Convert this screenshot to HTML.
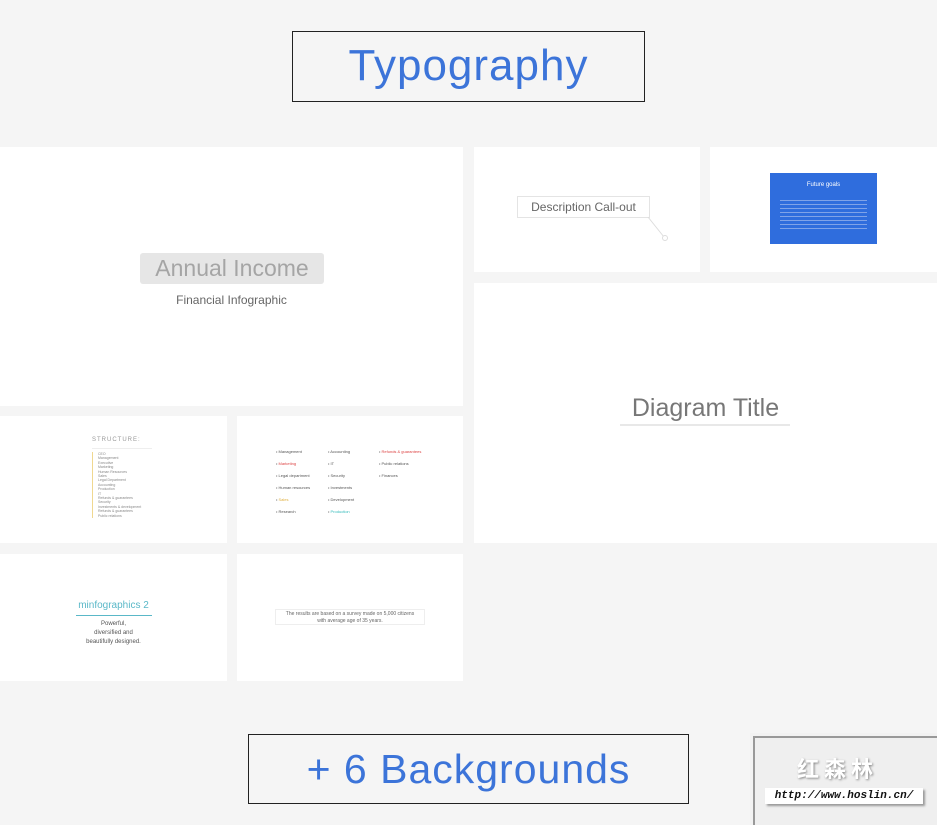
<!DOCTYPE html>
<html><head><meta charset="utf-8"><style>
*{margin:0;padding:0;box-sizing:border-box}
body{width:937px;height:825px;background:#f5f5f5;position:relative;overflow:hidden;font-family:"Liberation Sans",sans-serif}
.a{position:absolute}
.p{position:absolute;background:#fff}
.box{position:absolute;border:1px solid #222;color:#3c74d9;text-align:center}
.t{position:absolute;white-space:nowrap}
.sm{font-size:4px;color:#888;line-height:6.5px}
</style></head><body>
<div class="box" style="left:292px;top:31px;width:353px;height:71px;font-size:44px;line-height:68px;letter-spacing:1px">Typography</div>

<div class="p" style="left:0;top:147px;width:463px;height:259px"></div>
<div class="a" style="left:140px;top:253px;width:184px;height:31px;background:#e6e6e6;border-radius:3px;color:#a5a5a5;font-size:23px;line-height:31px;text-align:center">Annual Income</div>
<div class="t" style="left:0;width:463px;top:293px;text-align:center;font-size:12px;color:#666">Financial Infographic</div>

<div class="p" style="left:474px;top:147px;width:226px;height:125px"></div>
<div class="a" style="left:517px;top:196px;width:133px;height:22px;border:1px solid #e4e4e4;color:#666;font-size:12px;line-height:20px;text-align:center">Description Call-out</div>
<svg class="a" style="left:640px;top:216px" width="30" height="28"><line x1="8" y1="1" x2="24" y2="21" stroke="#ddd"/><circle cx="25" cy="22" r="2.5" fill="#fff" stroke="#ddd"/></svg>

<div class="p" style="left:710px;top:147px;width:227px;height:125px"></div>
<div class="a" style="left:770px;top:173px;width:107px;height:71px;background:#2f6ddd">
<div class="t" style="left:0;width:107px;top:9px;text-align:center;color:#fff;font-size:6px">Future goals</div>
<div class="a" style="left:10px;top:26px;width:87px;height:33px;background:repeating-linear-gradient(#2f6ddd 0,#2f6ddd 1px,#7fa3e8 1px,#7fa3e8 2px,#2f6ddd 2px,#2f6ddd 4px)"></div>
</div>

<div class="p" style="left:474px;top:283px;width:463px;height:260px"></div>
<div class="t" style="left:474px;width:463px;top:394px;text-align:center;font-size:25px;color:#777">Diagram Title</div>
<div class="a" style="left:620px;top:424px;width:170px;height:2px;background:#e8e8e8"></div>

<div class="p" style="left:0;top:416px;width:227px;height:127px"></div>
<div class="t" style="left:92px;top:437px;font-size:6px;color:#999;letter-spacing:1px">STRUCTURE:</div>
<div class="a" style="left:92px;top:448px;width:60px;height:1px;background:#eee"></div>
<div class="a sm" style="left:92px;top:452px;border-left:1px solid #f0d890;padding-left:5px;font-size:3.5px;line-height:4.4px">CEO<br>Management<br>Executive<br>Marketing<br>Human Resources<br>Sales<br>Legal Department<br>Accounting<br>Production<br>IT<br>Refunds &amp; guarantees<br>Security<br>Investments &amp; development<br>Refunds &amp; guarantees<br>Public relations</div>

<div class="p" style="left:237px;top:416px;width:226px;height:127px"></div>
<div class="a sm" style="left:276px;top:446px;line-height:12px;color:#555">• Management<br>• <span style="color:#d44">Marketing</span><br>• Legal department<br>• Human resources<br>• <span style="color:#e0b040">Sales</span><br>• Research</div>
<div class="a sm" style="left:328px;top:446px;line-height:12px;color:#555">• Accounting<br>• IT<br>• Security<br>• Investments<br>• Development<br>• <span style="color:#3bb">Production</span></div>
<div class="a sm" style="left:379px;top:446px;line-height:12px;color:#555">• <span style="color:#d44">Refunds &amp; guarantees</span><br>• Public relations<br>• Finances</div>

<div class="p" style="left:0;top:554px;width:227px;height:127px"></div>
<div class="t" style="left:0;width:227px;top:600px;text-align:center;font-size:10px;color:#5ab8c8">minfographics 2</div>
<div class="a" style="left:76px;top:615px;width:76px;height:1px;background:#5ab8c8"></div>
<div class="t" style="left:0;width:227px;top:620px;text-align:center;font-size:6px;line-height:9px;color:#555">Powerful,<br>diversified and<br>beautifully designed.</div>

<div class="p" style="left:237px;top:554px;width:226px;height:127px"></div>
<div class="a" style="left:275px;top:609px;width:150px;height:16px;border:1px solid #eee;font-size:5px;line-height:6.5px;color:#666;text-align:center;padding-top:1px">The results are based on a survey made on 5,000 citizens<br>with average age of 35 years.</div>

<div class="box" style="left:248px;top:734px;width:441px;height:70px;font-size:41px;line-height:68px;letter-spacing:1px">+ 6 Backgrounds</div>

<div class="a" style="left:750px;top:733px;width:187px;height:92px;background:#f2f2f2"></div>
<div class="a" style="left:753px;top:736px;width:184px;height:89px;border:2px solid #999;border-right:none;border-bottom:none;background:#efefef"></div>
<div class="t" style="left:797px;top:752px;font-size:22px;color:#fff;text-shadow:1px 1px 2px #888;font-family:'Noto Sans CJK SC',sans-serif;font-weight:bold">红 森 林</div>
<div class="a" style="left:765px;top:788px;width:158px;height:16px;background:#fff;box-shadow:2px 2px 2px #999;font-family:'Liberation Mono',monospace;font-style:italic;font-weight:bold;font-size:11px;line-height:16px;color:#111;text-align:center">http://www.hoslin.cn/</div>
</body></html>
